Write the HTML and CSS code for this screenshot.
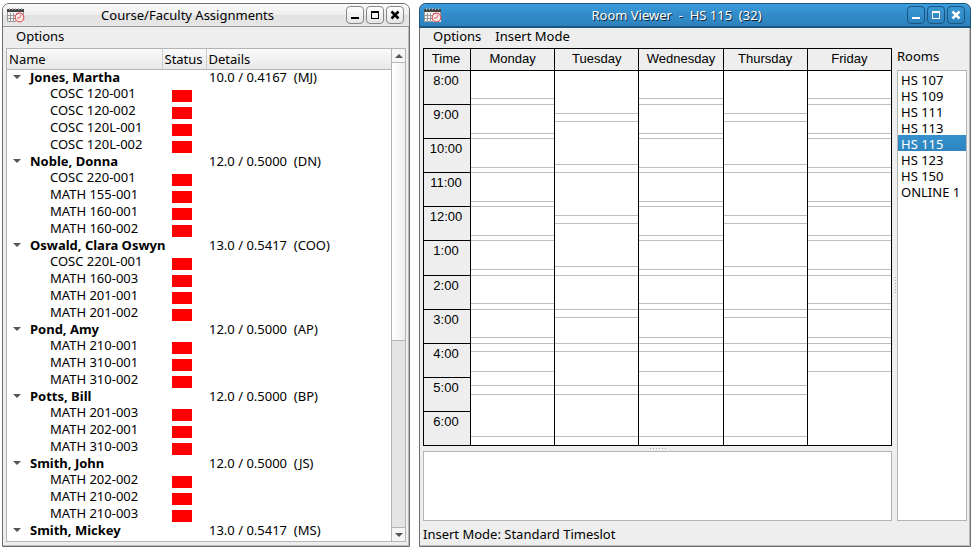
FILE: index.html
```html
<!DOCTYPE html>
<html lang="en">
<head>
<meta charset="utf-8">
<title>Scheduler</title>
<link rel="stylesheet" href="styles.css">
</head>
<body>
<svg class="defs" aria-hidden="true">
  <symbol id="cal" viewBox="0 0 18 15">
    <path fill="#f4f4f4" d="M0 2h17v12H0z"/>
    <path fill="#444" d="M0 1h17v3H0z"/>
    <path stroke="#aaa" d="M2.500 0v2M5.500 0v2M8.500 0v2M11.500 0v2M14.500 0v2"/>
    <path stroke="#999" fill="none" d="M.5 4v9.500H9M1 7.500h9M1 10.500h8M3.500 5v8M6.500 5v8M9.500 5v3M16.500 4v3"/>
    <circle cx="12.500" cy="9.500" r="4.300" fill="#fbecec" stroke="#dc5a5c" stroke-width="1.200"/>
    <path stroke="#dc5a5c" fill="none" d="M14 7l-1.500 3H10"/>
  </symbol>
  <symbol id="min" viewBox="0 0 16 16"><path fill="currentColor" d="M4 10h8v2H4z"/></symbol>
  <symbol id="max" viewBox="0 0 16 16"><path fill="currentColor" fill-rule="evenodd" d="M4 4h8v8H4zM5 6v5h6V6z"/></symbol>
  <symbol id="close" viewBox="0 0 16 16"><path stroke="currentColor" stroke-width="2.500" d="M4.500 4.500l7 7M11.500 4.500l-7 7"/></symbol>
</svg>
<main class="desktop">
  <section class="window faculty">
    <header class="titlebar">
      <svg class="app-icon"><use href="#cal"/></svg>
      <h1>Course/Faculty Assignments</h1>
      <button aria-label="Minimize"><svg><use href="#min"/></svg></button>
      <button aria-label="Maximize"><svg><use href="#max"/></svg></button>
      <button aria-label="Close"><svg><use href="#close"/></svg></button>
    </header>
    <nav class="menubar"><button>Options</button></nav>
    <div class="tree-frame">
      <div class="tree-view">
        <table class="tree">
          <thead><tr><th class="col-name">Name</th><th class="col-status">Status</th><th>Details</th></tr></thead>
          <tbody id="tree"></tbody>
        </table>
      </div>
      <div class="scrollbar">
        <button class="up" aria-label="Scroll up"></button>
        <div class="thumb"></div>
        <div class="trough"></div>
        <button class="down" aria-label="Scroll down"></button>
      </div>
    </div>
  </section>

  <section class="window viewer active">
    <header class="titlebar">
      <svg class="app-icon"><use href="#cal"/></svg>
      <h1>Room Viewer&nbsp; -&nbsp; HS 115&nbsp; (32)</h1>
      <button aria-label="Minimize"><svg><use href="#min"/></svg></button>
      <button aria-label="Maximize"><svg><use href="#max"/></svg></button>
      <button aria-label="Close"><svg><use href="#close"/></svg></button>
    </header>
    <nav class="menubar"><button>Options</button><button>Insert Mode</button></nav>
    <div class="panes">
      <div class="left-pane">
        <div class="week" id="week"></div>
        <div class="splitter"></div>
        <textarea aria-label="Conflicts"></textarea>
      </div>
      <div class="splitter vertical"></div>
      <div class="rooms">
        <label for="rooms">Rooms</label>
        <select id="rooms" size="8">
          <option>HS 107</option>
          <option>HS 109</option>
          <option>HS 111</option>
          <option>HS 113</option>
          <option selected>HS 115</option>
          <option>HS 123</option>
          <option>HS 150</option>
          <option>ONLINE 1</option>
        </select>
      </div>
    </div>
    <footer class="status">Insert Mode: Standard Timeslot</footer>
  </section>
</main>
<script src="app.js"></script>
</body>
</html>
```
FILE: styles.css
```css
* { box-sizing: border-box; }

body {
  margin: 0;
  background: #fff;
  color: #000;
  font: 13px/16px "Noto Sans", sans-serif;
}

button, select, textarea { font: inherit; color: inherit; }
.defs { display: none; }

.desktop {
  display: grid;
  grid-template-columns: 408fr 552fr;
  gap: 9px;
  height: 100vh;
  padding: 3px 0 2px 2px;
}

.window {
  display: flex;
  flex-direction: column;
  min-width: 0;
  min-height: 0;
  padding: 0 2px 2px 1px;
  background: #eee;
  border: 1px solid #6e6e6e;
  border-radius: 7px 7px 0 0;
  box-shadow: inset -1px -1px #bbb;
}

.titlebar {
  display: flex;
  flex: none;
  align-items: center;
  gap: 2px;
  height: 23px;
  margin: 0 -2px 0 -1px;
  padding: 0 5px 0 4px;
  border-bottom: 1px solid #999;
  border-radius: 6px 6px 0 0;
  background: linear-gradient(#fafafa, #eee 50%, #e2e2e2 50%, #e6e6e6);
}

.app-icon { width: 18px; height: 15px; }
.titlebar h1 { flex: 1; margin: 0; padding-left: 4px; font-size: 13px; font-weight: 400; text-align: center; white-space: nowrap; }

.titlebar button {
  width: 18px;
  height: 18px;
  padding: 0;
  border: 1px solid #888;
  border-radius: 4px;
  background: linear-gradient(#fff, #e4e4e4);
}

.titlebar button svg { display: block; width: 16px; height: 16px; }

.active .titlebar { border-color: #1c567f; color: #fff; background: linear-gradient(#3a9ddd, #328bc8 50%, #2c82bd); box-shadow: 0 0 0 1px #1c567f; }
.active .titlebar h1 { text-shadow: 1px 1px #123; }
.active .titlebar button { border-color: #1c567f; background: linear-gradient(#3a99d6, #2c82bd); }

.menubar { display: flex; flex: none; gap: 14px; height: 21px; padding: 0 0 4px 12px; }
.menubar button { padding: 0; border: 0; background: none; white-space: nowrap; }

.tree-frame { display: flex; flex: 1; min-height: 0; margin: 0 1px 2px 2px; border: 1px solid #b4b4b4; background: #fff; }
.tree-view { flex: 1; overflow: hidden; }
.tree { width: 100%; border-collapse: collapse; table-layout: fixed; }
.tree th { height: 20px; padding: 0 2px; border-bottom: 1px solid #b4b4b4; background: linear-gradient(#fafafa, #e8e8e8); font-weight: 400; text-align: left; }
.tree th + th { border-left: 1px solid #ccc; }
.tree td { height: 17px; padding: 0 3px 2px; line-height: 15px; white-space: nowrap; vertical-align: top; }
.tree td:nth-child(2) { padding-bottom: 0; }
.tree td:first-child { padding-left: 43px; }
.tree .person td { height: 16px; padding-bottom: 1px; }
.tree .person td:first-child { padding-left: 6px; font-weight: 700; }
.col-name { width: 155px; }
.col-status { width: 44px; }
.arrow { display: inline-block; margin-right: 9px; border: 4px solid transparent; border-top-color: #555; border-bottom: 0; vertical-align: 3px; }
.chip { display: block; width: 20px; height: 12px; margin: 4px 0 0 7px; background: #f00; }

.scrollbar { display: flex; flex-direction: column; width: 14px; border-left: 1px solid #b4b4b4; }
.scrollbar button { height: 13px; padding: 0; border: 0; background: #f6f6f6; }
.scrollbar button::before { content: ""; display: block; width: 0; margin: 0 auto; border: 4px solid transparent; }
.scrollbar .up::before { border-top: 0; border-bottom-color: #555; }
.scrollbar .down::before { border-bottom: 0; border-top-color: #555; }
.thumb { flex: 279; border: solid #b4b4b4; border-width: 1px 0; background: linear-gradient(90deg, #fff, #eee); }
.trough { flex: 187; border-bottom: 1px solid #b4b4b4; background: #e4e4e4; }

.panes { display: flex; flex: 1; min-height: 0; padding: 0 1px 0 2px; }
.left-pane { display: flex; flex: 1; flex-direction: column; min-width: 0; }

.week { display: grid; flex: 1; grid-template-columns: 47px repeat(5, 1fr); min-height: 0; border: 1px solid #000; border-right: 0; font: 13px/15px "Liberation Sans", sans-serif; text-align: center; }
.day { display: flex; flex-direction: column; min-width: 0; border-right: 1px solid #000; background: #fff; }
.day h2 { flex: none; height: 22px; margin: 0; padding-top: 2px; border-bottom: 1px solid #000; background: #eee; font: inherit; }
.slots { display: flex; flex: 1; flex-direction: column; margin-top: -1px; }
.slot { flex-basis: 0; }
.slot + .slot { background: linear-gradient(#bebebe, #bebebe) 0 0 / 100% 1px no-repeat; }
.hours { background: #eee; }
.hours .slot { padding: 3px 2px 0 0; }
.hours h2 { padding-right: 2px; }
.hours .slot + .slot { background-image: linear-gradient(#000, #000); }

.splitter { display: flex; flex: none; justify-content: center; height: 5px; }
.splitter::before { content: ""; width: 16px; height: 1px; margin-top: 2px; background: repeating-linear-gradient(90deg, #aaa 0 1px, transparent 1px 3px); }
.splitter.vertical { align-items: center; justify-content: flex-end; width: 5px; height: auto; padding-right: 1px; }
.splitter.vertical::before { width: 1px; height: 16px; margin: 0; background: repeating-linear-gradient(#aaa 0 1px, transparent 1px 3px); }

textarea { flex: none; width: 100%; height: 70px; border: 1px solid #b4b4b4; border-radius: 0; background: #fff; resize: none; }

.rooms { display: flex; flex: none; flex-direction: column; width: 70px; }
.rooms label { height: 22px; }
.rooms select { flex: 1; width: 100%; padding: 0; border: 1px solid #b4b4b4; border-radius: 0; background: #fff; overflow: hidden; }
.rooms option { height: 16px; min-height: 16px; padding: 0 3px; line-height: 15px; }
.rooms option:checked { background: linear-gradient(#3490cd, #2d84be); color: #fff; }

.status { flex: none; height: 23px; padding: 5px 2px 0; }
```
FILE: app.js
```js
const faculty = [
  ["Jones, Martha", "10.0 / 0.4167  (MJ)", ["COSC 120-001", "COSC 120-002", "COSC 120L-001", "COSC 120L-002"]],
  ["Noble, Donna", "12.0 / 0.5000  (DN)", ["COSC 220-001", "MATH 155-001", "MATH 160-001", "MATH 160-002"]],
  ["Oswald, Clara Oswyn", "13.0 / 0.5417  (COO)", ["COSC 220L-001", "MATH 160-003", "MATH 201-001", "MATH 201-002"]],
  ["Pond, Amy", "12.0 / 0.5000  (AP)", ["MATH 210-001", "MATH 310-001", "MATH 310-002"]],
  ["Potts, Bill", "12.0 / 0.5000  (BP)", ["MATH 201-003", "MATH 202-001", "MATH 310-003"]],
  ["Smith, John", "12.0 / 0.5000  (JS)", ["MATH 202-002", "MATH 210-002", "MATH 210-003"]],
  ["Smith, Mickey", "13.0 / 0.5417  (MS)", []]
];

document.getElementById("tree").innerHTML = faculty.map(([name, load, courses]) =>
  `<tr class="person"><td colspan="2"><span class="arrow"></span>${name}</td><td>${load.replace("  ", " &nbsp;")}</td></tr>` +
  courses.map(c => `<tr><td>${c}</td><td><span class="chip"></span></td><td></td></tr>`).join("")
).join("");

// Slot lengths in minutes, from 8:00 to 19:00.
const hours = Array(11).fill(60);
const evening = [15, 35, 25, 15, 75, 15];
const mwf = [...Array(8).fill([50, 10]).flat(), ...evening];
const tr = [75, 15, 75, 15, 75, 15, 75, 15, 60, 15, 45, 15, 60, 15, 75, 15];
const friday = [...Array(8).fill([50, 10]).flat(), 15, 35, 130];

function column(title, slots, labels = []) {
  const cells = slots.map((m, i) => `<div class="slot" style="flex-grow:${m}">${labels[i] || ""}</div>`).join("");
  return `<div class="day${labels.length ? " hours" : ""}"><h2>${title}</h2><div class="slots">${cells}</div></div>`;
}

const clock = hours.map((_, i) => `${(i + 7) % 12 + 1}:00`);
document.getElementById("week").innerHTML =
  column("Time", hours, clock) + column("Monday", mwf) + column("Tuesday", tr) +
  column("Wednesday", mwf) + column("Thursday", tr) + column("Friday", friday);
```
